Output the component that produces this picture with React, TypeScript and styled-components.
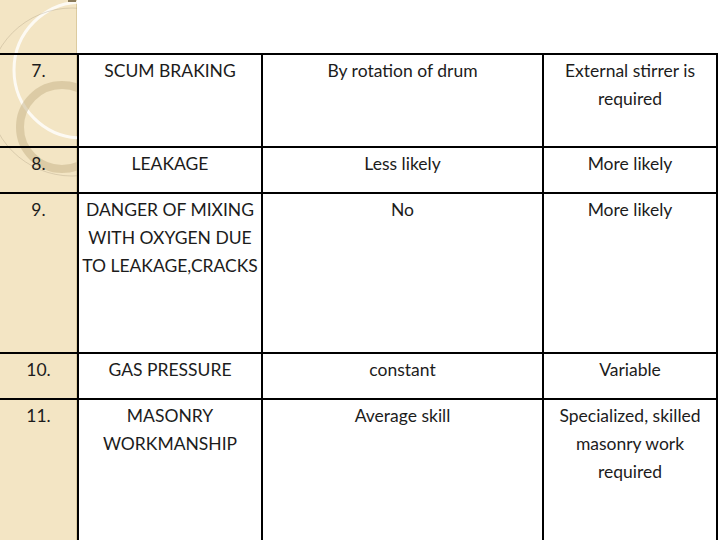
import styled, { createGlobalStyle } from 'styled-components'

const GlobalStyle = createGlobalStyle`
  body {
    margin: 0;
    background: #ffffff;
  }
`

const Slide = styled.div`
  position: relative;
  width: 720px;
  height: 540px;
  overflow: hidden;
  background: linear-gradient(
    to right,
    #f3e5c4 0,
    #f3e5c4 76px,
    #dccb9f 76px,
    #dccb9f 77px,
    #ffffff 77px
  );
  font-family: Lato, 'Open Sans', sans-serif;
`

const Decoration = styled.svg`
  position: absolute;
  left: 0;
  top: 0;
  width: 77px;
  height: 540px;
`

const Table = styled.div`
  position: relative;
  margin-top: 53px;
  width: 718px;
  display: grid;
  grid-template-columns: 79px 184px 281px 174px;
  grid-template-rows: 93px 46px 160px 46px 160px;
  border-top: 2px solid #000;
`

const Cell = styled.div<{ $first?: boolean }>`
  box-sizing: border-box;
  border-right: 2px solid #000;
  border-bottom: 2px solid #000;
  background: ${(p) => (p.$first ? 'transparent' : '#ffffff')};
  padding: 2px 2px 0;
  text-align: center;
  font-size: 17.5px;
  font-weight: 400;
  line-height: 28px;
  color: #1c1c1c;
`

const rows = [
  ['7.', 'SCUM BRAKING', 'By rotation of drum', 'External stirrer is\nrequired'],
  ['8.', 'LEAKAGE', 'Less likely', 'More likely'],
  ['9.', 'DANGER OF MIXING\nWITH OXYGEN DUE\nTO LEAKAGE,CRACKS', 'No', 'More likely'],
  ['10.', 'GAS PRESSURE', 'constant', 'Variable'],
  ['11.', 'MASONRY\nWORKMANSHIP', 'Average skill', 'Specialized, skilled\nmasonry work\nrequired'],
]

function Lines({ text }: { text: string }) {
  const parts = text.split('\n')
  return (
    <>
      {parts.map((line, i) => (
        <span key={i}>
          {line}
          {i < parts.length - 1 && <br />}
        </span>
      ))}
    </>
  )
}

export default function App() {
  return (
    <>
      <GlobalStyle />
      <Slide>
        <Decoration viewBox="0 0 77 540">
          <circle cx="82" cy="70" r="68" fill="none" stroke="rgba(255,255,255,0.8)" strokeWidth="3" />
          <circle cx="72" cy="92" r="84" fill="none" stroke="rgba(150,135,110,0.35)" strokeWidth="0.8" />
          <circle cx="62" cy="127" r="42" fill="none" stroke="rgba(200,183,140,0.55)" strokeWidth="8" />
          <rect x="68" y="0" width="8" height="2" fill="#8a7a5a" />
        </Decoration>
        <Table>
          {rows.map((row) =>
            row.map((text, c) => (
              <Cell key={row[0] + c} $first={c === 0}>
                <Lines text={text} />
              </Cell>
            ))
          )}
        </Table>
      </Slide>
    </>
  )
}
